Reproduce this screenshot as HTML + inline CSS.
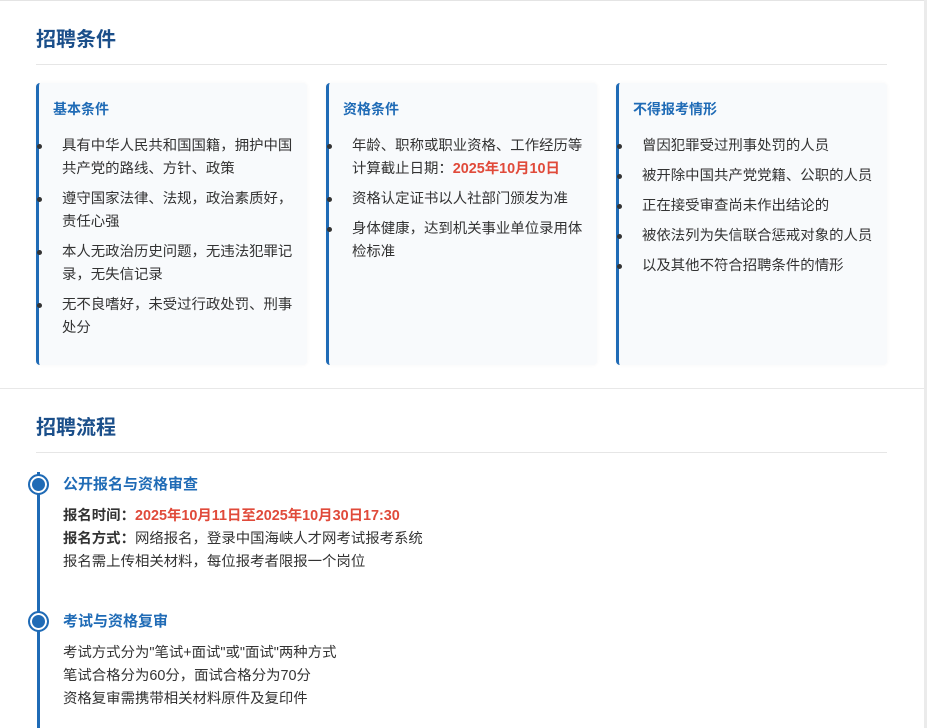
<!DOCTYPE html>
<html><head><meta charset="utf-8">
<style>
*{margin:0;padding:0;box-sizing:border-box}
html,body{width:927px;height:728px;overflow:hidden;background:#fff}
body{font-family:"Liberation Sans","Noto Sans CJK SC",sans-serif;color:#333;position:relative}
.topline{position:absolute;left:0;top:0;width:924px;height:1px;background:#e4e4e4}
.rstrip{position:absolute;left:924px;top:0;width:3px;height:728px;background:#ebebeb}
h2{position:absolute;left:36px;font-size:20px;font-weight:bold;color:#1b4f8a;line-height:24px}
.hr{position:absolute;left:36px;width:851px;height:1px;background:#e6e6e6}
.card{position:absolute;top:83px;width:271px;height:282px;background:#f8fafc;border-left:3px solid #1f6bb6;border-radius:4px;box-shadow:0 0 4px rgba(0,0,0,.04)}
.card h3{position:absolute;left:14px;top:16px;font-size:14px;font-weight:bold;color:#1f6bb6;line-height:20px}
.card ul{position:absolute;left:0;top:52px;list-style:none;width:264px}
.card li{position:relative;padding-left:23px;font-size:14.4px;line-height:23px;margin-bottom:7px;color:#333}
.card li:before{content:"";position:absolute;left:-2px;top:9px;width:5px;height:5px;border-radius:50%;background:#333}
.red{color:#e04a3a;font-weight:bold}
.div{position:absolute;left:0;top:388px;width:924px;height:1px;background:#e8e8e8}
.tl{position:absolute;left:37px;top:472px;width:3px;height:256px;background:#1f6bb6}
.dot{position:absolute;left:28px;width:21px;height:21px;border-radius:50%;background:#1f6bb6;border:2px solid #1f6bb6;box-shadow:inset 0 0 0 2px #fff}
.tt{position:absolute;left:63px;font-size:15px;font-weight:bold;color:#1f6bb6;line-height:20px}
.tc{position:absolute;left:63px;font-size:14.4px;line-height:23px;color:#333}
b{color:#333}
</style></head><body>
<div class="topline"></div><div class="rstrip"></div>
<h2 style="top:28px">招聘条件</h2>
<div class="hr" style="top:64px"></div>
<div class="card" style="left:36px"><h3>基本条件</h3><ul>
<li>具有中华人民共和国国籍，拥护中国共产党的路线、方针、政策</li>
<li>遵守国家法律、法规，政治素质好，责任心强</li>
<li>本人无政治历史问题，无违法犯罪记录，无失信记录</li>
<li>无不良嗜好，未受过行政处罚、刑事处分</li></ul></div>
<div class="card" style="left:326px"><h3>资格条件</h3><ul>
<li>年龄、职称或职业资格、工作经历等计算截止日期：<span class="red">2025年10月10日</span></li>
<li>资格认定证书以人社部门颁发为准</li>
<li>身体健康，达到机关事业单位录用体检标准</li></ul></div>
<div class="card" style="left:616px"><h3>不得报考情形</h3><ul>
<li>曾因犯罪受过刑事处罚的人员</li>
<li>被开除中国共产党党籍、公职的人员</li>
<li>正在接受审查尚未作出结论的</li>
<li>被依法列为失信联合惩戒对象的人员</li>
<li>以及其他不符合招聘条件的情形</li></ul></div>
<div class="div"></div>
<h2 style="top:416px">招聘流程</h2>
<div class="hr" style="top:452px"></div>
<div class="tl"></div>
<div class="dot" style="top:474px"></div>
<div class="tt" style="top:475px">公开报名与资格审查</div>
<div class="tc" style="top:505px"><b>报名时间：</b><span class="red">2025年10月11日至2025年10月30日17:30</span><br><b>报名方式：</b>网络报名，登录中国海峡人才网考试报考系统<br>报名需上传相关材料，每位报考者限报一个岗位</div>
<div class="dot" style="top:611px"></div>
<div class="tt" style="top:612px">考试与资格复审</div>
<div class="tc" style="top:642px">考试方式分为"笔试+面试"或"面试"两种方式<br>笔试合格分为60分，面试合格分为70分<br>资格复审需携带相关材料原件及复印件</div>
</body></html>
